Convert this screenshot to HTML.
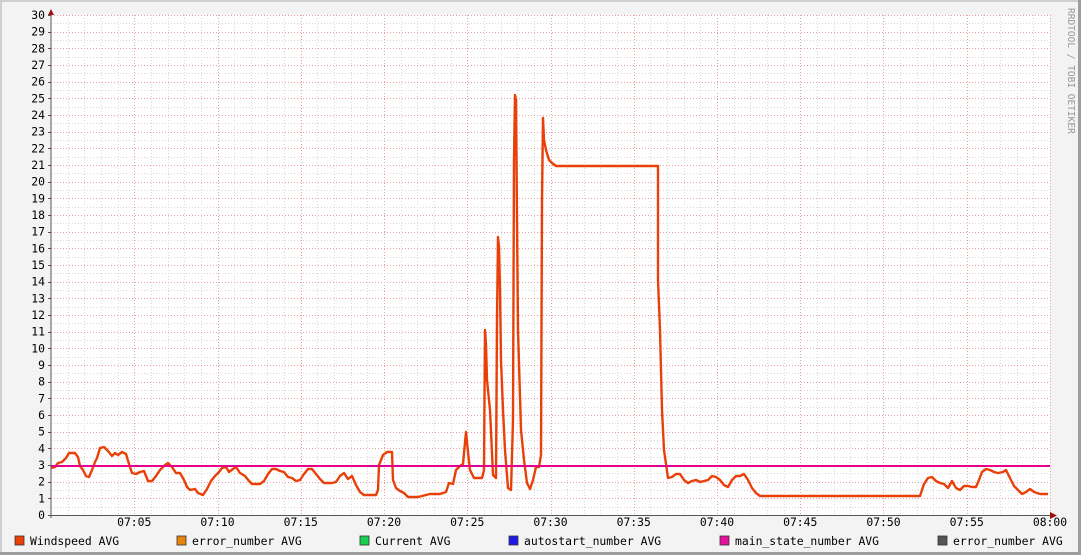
<!DOCTYPE html>
<html><head><meta charset="utf-8"><style>
body{margin:0;width:1081px;height:555px;overflow:hidden;background:#f3f3f3}
svg{display:block}
text{font-family:"DejaVu Sans Mono","Liberation Mono",monospace;font-size:11.4px;fill:#000}
</style></head><body>
<svg width="1081" height="555" viewBox="0 0 1081 555" xmlns="http://www.w3.org/2000/svg">
<rect x="0" y="0" width="1081" height="555" fill="#f3f3f3"/>
<rect x="0" y="0" width="1081" height="2" fill="#cfcfcf"/>
<rect x="0" y="0" width="2" height="555" fill="#cfcfcf"/>
<rect x="1078" y="0" width="3" height="555" fill="#9e9e9e"/>
<rect x="0" y="552" width="1081" height="3" fill="#9e9e9e"/>
<rect x="51" y="15" width="999" height="500" fill="#fff"/>
<g id="grid"></g>
<polyline fill="none" stroke="#e84008" stroke-width="2.4" stroke-linejoin="round" points="51,468 55,467 58,463 62,462 66,458 69,453 75,453 78,457 80,466 83,470 86,476 89,477 92,470 95,462 97,458 100,448 104,447 108,451 112,456 115,453 118,455 122,452 126,454 129,464 132,473 136,474 140,472 144,471 148,481 152,481 156,476 160,470 165,465 168,463 172,467 176,473 180,473 184,480 187,487 190,490 195,489 198,493 203,495 207,489 211,481 215,476 219,472 222,468 226,467 229,472 233,469 236,467 240,473 245,476 249,481 252,484 256,484 260,484 264,481 268,474 272,469 276,469 280,471 284,472 288,477 292,478 296,481 300,480 304,474 308,469 312,469 316,474 320,479 324,483 328,483 332,483 336,482 340,476 344,473 348,479 352,476 356,485 360,492 364,495 368,495 372,495 376,495 378,490 379,465 383,455 387,452 392,452 393,480 396,488 400,491 404,493 408,497 412,497 418,497 422,496 430,494 440,494 446,492 449,483 453,484 456,470 460,466 463,464 466,432 468,452 470,470 474,478 478,478 482,478 484,470 485,330 486,345 487,380 490,410 493,475 496,478 497,320 498,237 499,247 500,290 501,360 503,410 505,450 508,488 511,490 513,420 514,160 515,95 516,100 518,330 521,430 524,460 527,483 530,489 533,480 536,467 539,467 541,455 542,200 543,118 544,140 546,150 549,160 552,163 556,166 658,166 658,280 660,330 662,410 664,450 668,478 672,477 676,474 680,474 684,480 688,483 692,481 696,480 700,482 708,480 712,476 716,477 720,480 724,485 728,487 732,480 736,476 740,476 744,474 748,480 752,488 756,493 760,496 920,496 924,484 928,478 932,477 936,481 940,483 944,484 948,488 952,481 956,488 960,490 964,486 968,486 972,487 976,487 979,480 982,472 986,469 990,470 994,472 998,473 1003,472 1006,470 1010,478 1014,486 1018,490 1022,494 1026,492 1030,489 1034,492 1040,494 1048,494"/>
<line x1="51" y1="466" x2="1050" y2="466" stroke="#e8008c" stroke-width="2"/>
<line x1="51" y1="10" x2="51" y2="518" stroke="#555" stroke-width="1"/>
<line x1="48" y1="515.5" x2="1054" y2="515.5" stroke="#555" stroke-width="1"/>
<polygon points="48,15 54,15 51,9" fill="#a01010"/>
<polygon points="1050,512 1050,519 1057,515.5" fill="#a01010"/>
<g id="labels"></g>
<text x="1068" y="8" transform="rotate(90 1068 8)" style="font-size:9.5px;fill:#999">RRDTOOL / TOBI OETIKER</text>
<g id="legend">
<rect x="15" y="536" width="9" height="9" fill="#e84008" stroke="#333" stroke-width="0.8"/><text x="30" y="545">Windspeed AVG</text>
<rect x="177" y="536" width="9" height="9" fill="#e8840c" stroke="#333" stroke-width="0.8"/><text x="192" y="545">error_number AVG</text>
<rect x="360" y="536" width="9" height="9" fill="#18d050" stroke="#333" stroke-width="0.8"/><text x="375" y="545">Current AVG</text>
<rect x="509" y="536" width="9" height="9" fill="#2018e8" stroke="#333" stroke-width="0.8"/><text x="524" y="545">autostart_number AVG</text>
<rect x="720" y="536" width="9" height="9" fill="#e8109c" stroke="#333" stroke-width="0.8"/><text x="735" y="545">main_state_number AVG</text>
<rect x="938" y="536" width="9" height="9" fill="#555" stroke="#333" stroke-width="0.8"/><text x="953" y="545">error_number AVG</text>
</g>
</svg>
<script>
var ns="http://www.w3.org/2000/svg",g=document.getElementById("grid"),L=document.getElementById("labels");
function ln(x1,y1,x2,y2,c){var e=document.createElementNS(ns,"line");e.setAttribute("x1",x1);e.setAttribute("y1",y1);e.setAttribute("x2",x2);e.setAttribute("y2",y2);e.setAttribute("stroke",c);e.setAttribute("stroke-width","1");e.setAttribute("stroke-dasharray","1,2");g.appendChild(e);}
function tx(x,y,s,a){var e=document.createElementNS(ns,"text");e.setAttribute("x",x);e.setAttribute("y",y);e.setAttribute("text-anchor",a);e.textContent=s;L.appendChild(e);}
for(var i=1;i<60;i++){var x=Math.round(51+i*16.65)+.5;ln(x,15,x,515,i%5?"#d8d8d8":"#e8a0a0");}
ln(1050.5,15,1050.5,515,"#e8a0a0");
for(var j=1;j<=60;j++){var y=Math.round(515-j*8.333)+.5;ln(51,y,1050,y,j%2?"#d8d8d8":"#e8a0a0");}
for(var v=0;v<=30;v++){var y=515-v*16.667;tx(45,y+4,String(v),"end");var t=document.createElementNS(ns,"line");t.setAttribute("x1",48);t.setAttribute("x2",51);t.setAttribute("y1",Math.round(y)+.5);t.setAttribute("y2",Math.round(y)+.5);t.setAttribute("stroke","#555");L.appendChild(t);}
for(var m=5;m<=60;m+=5){var x=51+m*16.65;var h=7+Math.floor(m/60),mm=m%60;tx(x,526,"0"+h+":"+(mm<10?"0":"")+mm,"middle");}
</script>
</body></html>
